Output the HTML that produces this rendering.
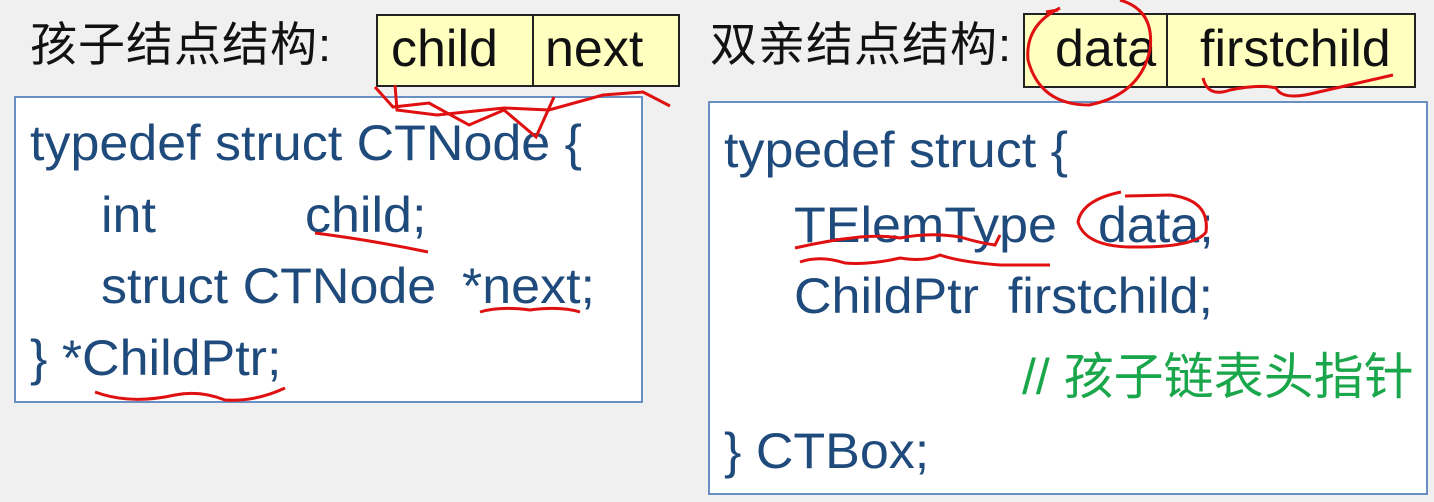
<!DOCTYPE html>
<html><head><meta charset="utf-8"><style>
body{margin:0;width:1434px;height:502px;background:#f0f0f0;position:relative;overflow:hidden;font-family:"Liberation Sans","Noto Sans CJK SC",sans-serif}
.t{position:absolute;font-size:50px;line-height:50px;color:#1f4a7c;white-space:pre;transform:scaleX(1.04);transform-origin:left top}
.h{position:absolute;font-size:47px;line-height:47px;color:#111;white-space:pre;letter-spacing:1px}
.k{position:absolute;font-size:52px;line-height:52px;color:#111;white-space:pre}
.box{position:absolute;background:#fff;border:2px solid #6a8fc4}
.y{position:absolute;background:#ffffc0;border:2px solid #222}
</style></head><body>
<div class="h" style="left:30px;top:21px">孩子结点结构:</div>
<div class="y" style="left:376px;top:14px;width:156px;height:69px"></div>
<div class="y" style="left:532px;top:14px;width:144px;height:69px"></div>
<div class="k" style="left:391px;top:23px">child</div>
<div class="k" style="left:545px;top:23px">next</div>

<div class="h" style="left:710px;top:21px">双亲结点结构:</div>
<div class="y" style="left:1023px;top:13px;width:143px;height:71px"></div>
<div class="y" style="left:1166px;top:13px;width:246px;height:71px"></div>
<div class="k" style="left:1055px;top:23px">data</div>
<div class="k" style="left:1200px;top:23px">firstchild</div>

<div class="box" style="left:14px;top:96px;width:625px;height:303px"></div>
<div class="box" style="left:708px;top:101px;width:716px;height:390px"></div>

<div class="t" style="left:30px;top:118px">typedef struct CTNode {</div>
<div class="t" style="left:101px;top:190px">int</div>
<div class="t" style="left:305px;top:190px">child;</div>
<div class="t" style="left:101px;top:261px">struct CTNode</div>
<div class="t" style="left:462px;top:261px">*next;</div>
<div class="t" style="left:30px;top:333px">} *ChildPtr;</div>

<div class="t" style="left:724px;top:125px">typedef struct {</div>
<div class="t" style="left:794px;top:200px">TElemType</div>
<div class="t" style="left:1098px;top:200px">data;</div>
<div class="t" style="left:794px;top:271px">ChildPtr  firstchild;</div>
<div class="t" style="left:1022px;top:352px;color:#1aa64a;transform:none;font-size:50px">// 孩子链表头指针</div>
<div class="t" style="left:724px;top:426px">} CTBox;</div>

<svg width="1434" height="502" style="position:absolute;left:0;top:0" fill="none" stroke="#e01010" stroke-width="3">
<path d="M375 87 L393 107 L429 103 L469 125 L504 110 L536 137 L554 97"/>
<path d="M395 85 L397 110 L437 115 L504 108 L549 110 L603 95 L643 92 L670 106"/>
<path d="M315 233 Q370 240 428 252"/>
<path d="M480 312 Q500 306 530 310 Q560 306 580 312"/>
<path d="M95 392 Q130 405 175 395 Q200 390 225 400 Q255 402 285 388"/>
<path d="M1060 8 Q1025 25 1028 60 Q1040 105 1089 105 Q1140 95 1150 50 Q1155 10 1120 0"/>
<path d="M1046 12 L1058 10"/>
<path d="M1203 78 Q1208 98 1230 90 Q1260 84 1276 88 Q1282 100 1310 94 Q1350 85 1393 75"/>
<path d="M795 248 Q830 240 860 237 Q880 235 900 238 Q930 232 960 237 Q980 243 995 245 L1000 235"/>
<path d="M800 262 Q820 255 845 263 Q870 265 900 258 Q925 262 940 255 Q960 262 1000 265 L1050 265"/>
<path d="M1121 192 Q1082 200 1078 222 Q1085 246 1130 247 Q1195 248 1206 232 Q1210 200 1170 195 L1125 196"/>
</svg>
</body></html>
